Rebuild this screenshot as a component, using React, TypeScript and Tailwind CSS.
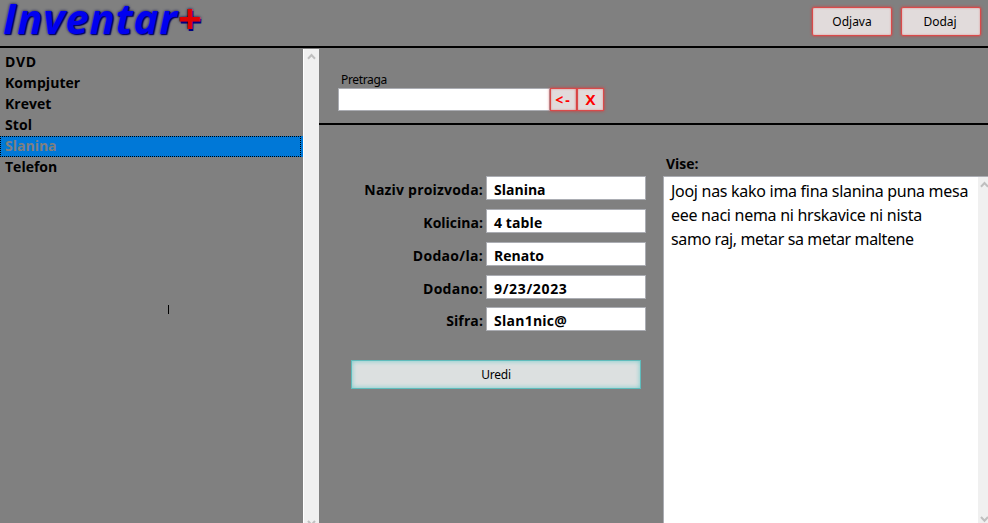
import type { ReactNode } from "react";

const items = [
  { name: "DVD", spacing: "tracking-[0.6px]" },
  { name: "Kompjuter", spacing: "tracking-[0.06px]" },
  { name: "Krevet", spacing: "tracking-normal" },
  { name: "Stol", spacing: "tracking-[0.1px]" },
  { name: "Slanina", spacing: "tracking-normal" },
  { name: "Telefon", spacing: "tracking-normal" },
];

const fields = [
  { label: "Naziv proizvoda:", value: "Slanina", gap: "mb-[9px]", labelSpacing: "tracking-[0.2px]", spacing: "tracking-normal" },
  { label: "Kolicina:", value: "4 table", gap: "mb-[9px]", labelSpacing: "tracking-normal", spacing: "tracking-[0.1px]" },
  { label: "Dodao/la:", value: "Renato", gap: "mb-[9px]", labelSpacing: "tracking-[0.3px]", spacing: "tracking-normal" },
  { label: "Dodano:", value: "9/23/2023", gap: "mb-2", labelSpacing: "tracking-[0.25px]", spacing: "tracking-[0.65px]" },
  { label: "Sifra:", value: "Slan1nic@", gap: "", labelSpacing: "tracking-[0.1px]", spacing: "tracking-[0.25px]" },
];

function Chevron({ down = false }: { down?: boolean }) {
  return (
    <svg width="9" height="7" viewBox="0 0 9 7" className="shrink-0" fill="none" stroke="#bfbfbf" strokeWidth="2">
      <path d={down ? "M1 1 L4.5 4.8 L8 1" : "M1 5.8 L4.5 2 L8 5.8"} />
    </svg>
  );
}

function RedButton({ children, className }: { children: ReactNode; className: string }) {
  return (
    <button
      className={`flex items-center justify-center border border-[#d94a4a] bg-[#e1dbdb] shadow-[0_0_3px_#d83b3b,inset_0_0_2px_#dc8888] ${className}`}
    >
      {children}
    </button>
  );
}

export default function App() {
  return (
    <div className="flex h-[523px] w-[988px] flex-col overflow-hidden bg-[#808080] font-['Noto_Sans','Open_Sans',sans-serif] text-black">
      <header className="flex h-12 shrink-0 justify-between border-b-2 border-black pr-[7px]">
        <h1 className="ml-[3px] font-['Open_Sans',sans-serif] text-[42px] leading-[36px] font-bold whitespace-nowrap text-[#0000f0] italic [text-shadow:1px_1px_1px_#000060,0_0_3px_#000050]">
          <span className="tracking-[0.7px]">Inventar</span>
          <span className="text-[#e00000] [text-shadow:1px_2px_0_#000080,0_0_3px_#000050]">+</span>
        </h1>
        <div className="flex gap-[9px] pt-[7px] text-[12px]">
          <RedButton className="h-[29px] w-20 rounded-[2px]">Odjava</RedButton>
          <RedButton className="h-[29px] w-20 rounded-[2px] pr-[2px]">Dodaj</RedButton>
        </div>
      </header>

      <div className="flex min-h-0 flex-1">
        <aside className="flex w-[319px] shrink-0 pt-px">
          <div className="relative w-[303px] pt-[3px] font-['Open_Sans',sans-serif] text-[14px] font-bold">
            {items.map(({ name, spacing }) => (
              <div
                key={name}
                className={
                  name === "Slanina"
                    ? "h-[21px] bg-[#0078d7] pr-[2px] text-[#808080]"
                    : "h-[21px]"
                }
              >
                <div
                  className={
                    name === "Slanina"
                      ? `h-[21px] border border-dotted border-black pl-1 leading-[17px] ${spacing}`
                      : `pl-[5px] leading-[19px] ${spacing}`
                  }
                >
                  {name}
                </div>
              </div>
            ))}
            <div className="absolute top-[256px] left-[168px] h-[9px] w-px bg-black" />
          </div>
          <div className="flex w-4 flex-col items-center justify-between border-l border-white bg-[#f0f0f0] pt-1">
            <Chevron />
            <div className="h-[3px] overflow-hidden"><Chevron down /></div>
          </div>
        </aside>

        <main className="flex min-w-0 flex-1 flex-col">
          <section className="h-[77px] shrink-0 border-b-2 border-black pt-[23px] pl-[19px]">
            <label className="ml-[3px] block h-[17px] text-[12px] leading-[17px] tracking-[-0.35px]">Pretraga</label>
            <div className="flex items-start">
              <div className="h-[23px] w-[212px] border border-[#abadb3] bg-white" />
              <RedButton className="h-[23px] w-[27px] font-['Open_Sans',sans-serif] text-[14px] font-bold tracking-[2px] text-[#ff0000]">
                &lt;-
              </RedButton>
              <RedButton className="h-[23px] w-[27px] font-['Open_Sans',sans-serif] text-[15px] font-bold text-[#ff0000]">
                X
              </RedButton>
            </div>
          </section>

          <div className="flex min-h-0 flex-1">
            <section className="w-[344px] shrink-0 pt-[51px]">
              {fields.map((field) => (
                <div key={field.label} className={`flex h-6 font-['Open_Sans',sans-serif] text-[14px] font-bold ${field.gap}`}>
                  <div className={`w-[164px] text-right leading-7 ${field.labelSpacing}`}>{field.label}</div>
                  <div className={`ml-[3px] w-40 border border-[#abadb3] bg-white pl-[7px] leading-[26px] ${field.spacing}`}>{field.value}</div>
                </div>
              ))}
              <button className="mt-[29px] ml-8 flex h-[29px] w-[290px] items-center justify-center border border-[#5fbcbc] bg-[#dce0e0] text-[12px] tracking-[-0.2px] shadow-[inset_0_0_5px_#79cccc]">
                Uredi
              </button>
            </section>

            <section className="flex min-w-0 flex-1 flex-col">
              <h2 className="h-[51px] pt-[29px] pl-[3px] font-['Open_Sans',sans-serif] text-[14px] leading-[20px] font-bold">Vise:</h2>
              <div className="flex min-h-0 flex-1 border-t border-l border-[#abadb3] bg-white">
                <div className="w-[314px] pt-[2px] pl-[7px] text-[16px] leading-6 whitespace-nowrap">
                  <p className="tracking-[-0.29px]">Jooj nas kako ima fina slanina puna mesa</p>
                  <p className="tracking-[-0.28px]">eee naci nema ni hrskavice ni nista</p>
                  <p className="tracking-[-0.38px]">samo raj, metar sa metar maltene</p>
                </div>
                <div className="flex min-w-0 flex-1 flex-col items-end justify-between overflow-hidden bg-[#f0f0f0] pt-1">
                  <div className="-mr-px"><Chevron /></div>
                  <div className="-mr-px"><Chevron down /></div>
                </div>
              </div>
            </section>
          </div>
        </main>
      </div>
    </div>
  );
}
